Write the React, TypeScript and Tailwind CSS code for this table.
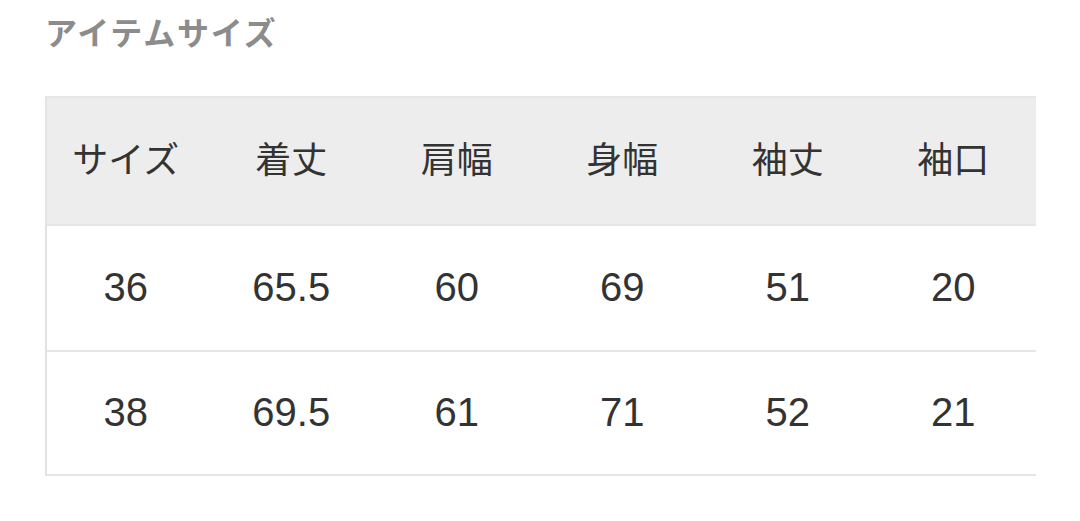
import React from "react";

const headers = ["サイズ", "着丈", "肩幅", "身幅", "袖丈", "袖口"];
const rows = [
  ["36", "65.5", "60", "69", "51", "20"],
  ["38", "69.5", "61", "71", "52", "21"],
];

export default function App() {
  return (
    <div
      className="w-[1080px] h-[521px] bg-white overflow-hidden"
      style={{ fontFamily: '"Liberation Sans", "Noto Sans CJK JP", sans-serif' }}
    >
      <div className="pl-[45px] pt-[14px]">
        <h2 className="text-[32px] leading-[40px] font-bold text-[#8c8c8c] tracking-[1.8px]">
          アイテムサイズ
        </h2>
        <div className="mt-[42px] w-[991px] overflow-hidden border-l-2 border-[#e3e3e3]">
          <div className="w-[993px]">
            <div className="grid grid-cols-6 h-[128px] bg-[#ededed] border-t-2 border-[#e6e6e6] items-center">
              {headers.map((h) => (
                <div key={h} className="text-center text-[36px] leading-[44px] text-[#333] pr-[8px]">
                  {h}
                </div>
              ))}
            </div>
            {rows.map((r, i) => (
              <div
                key={i}
                className="grid grid-cols-6 h-[126px] items-center border-t-2 border-[#e6e6e6] last:border-b-2"
              >
                {r.map((c, j) => (
                  <div key={j} className="text-center text-[40px] leading-[46px] text-[#333] pr-[8px] pb-[3px]">
                    {c}
                  </div>
                ))}
              </div>
            ))}
          </div>
        </div>
      </div>
    </div>
  );
}
